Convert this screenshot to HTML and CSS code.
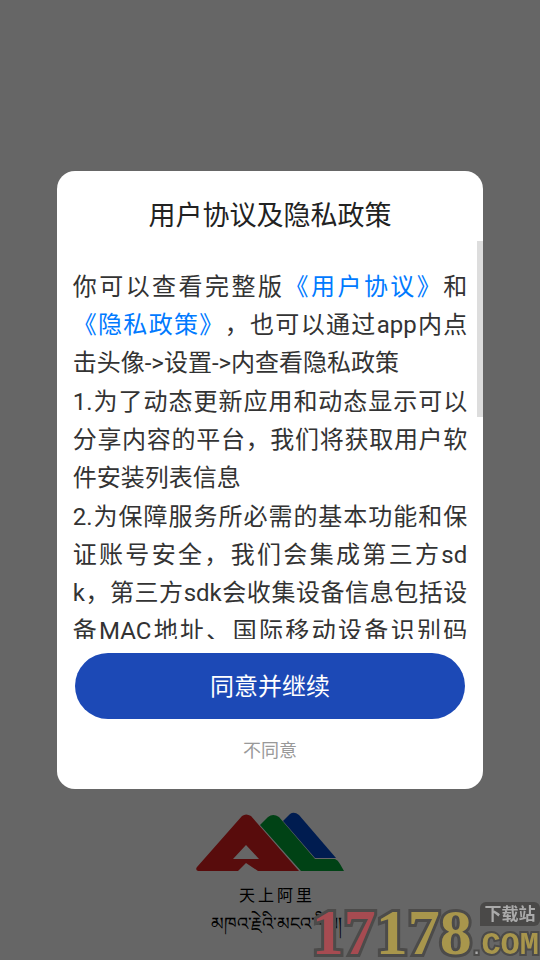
FILE: index.html
```
<!DOCTYPE html>
<html lang="zh-CN">
<head>
    <meta charset="UTF-8">
    <meta name="viewport" content="width=device-width, initial-scale=1.0">
    <title>用户协议及隐私政策</title>
    <link rel="stylesheet" href="styles.css">
</head>
<body>
    <footer class="brand">
        <svg class="brand-logo" width="148" height="60" viewBox="0 0 148 60">
            <path fill="#dc2020" fill-rule="evenodd" d="M46 4Q50 1 55 4L103 59H62L50 51L42 59H2Q-1 58 1 55ZM50 33L37 47H63Z"/>
            <path fill="#00a535" d="M64 13L72 5Q77 1 83 5L119 47H139Q142 48 144 52L148 59H105Z"/>
            <path fill="#0046c8" d="M87 9L94 2Q98 -1 103 3L140 46H119Z"/>
        </svg>
        <div class="brand-name">天上阿里</div>
        <div class="brand-tibetan" lang="bo">མཁའ་རྗེའི་མངའ་རིས།</div>
    </footer>

    <div class="mask">
        <section class="dialog" role="dialog" aria-labelledby="title">
            <h1 id="title">用户协议及隐私政策</h1>
            <div class="content">
                <p>你可以查看完整版<a href="#user">《用户协议》</a>和<a href="#privacy">《隐私政策》</a>，也可以通过app内点击头像-&gt;设置-&gt;内查看隐私政策</p>
                <p>1.为了动态更新应用和动态显示可以分享内容的平台，我们将获取用户软件安装列表信息</p>
                <p>2.为保障服务所必需的基本功能和保证账号安全，我们会集成第三方sdk，第三方sdk会收集设备信息包括设备MAC地址、国际移动设备识别码（IMEI）</p>
                <span class="thumb"></span>
            </div>
            <button class="agree">同意并继续</button>
            <button class="refuse">不同意</button>
        </section>
    </div>

    <div class="watermark">
        <div class="digits"><span>17</span>178</div>
        <div class="site">
            <div class="tag">下载站</div>
            <div class="com"><i>.</i>COM</div>
        </div>
    </div>
</body>
</html>
```
FILE: styles.css
```
* {
    box-sizing: border-box;
}

body {
    margin: 0;
    min-height: 100vh;
    display: flex;
    flex-direction: column;
    justify-content: flex-end;
    overflow: hidden;
    background: #fff;
    font-family: Roboto, "Noto Sans CJK SC", sans-serif;
    text-spacing-trim: space-all;
}

.brand {
    display: flex;
    flex-direction: column;
    align-items: center;
    padding-bottom: 20px;
    color: #000;
}

.brand-logo {
    margin-bottom: 12px;
}

.brand-name {
    padding-left: 14px;
    font-size: 16px;
    line-height: 24px;
    letter-spacing: 3px;
}

.brand-tibetan {
    padding-left: 12px;
    font-size: 18px;
    line-height: 32px;
}

.mask {
    position: fixed;
    inset: 0;
    display: flex;
    align-items: center;
    justify-content: center;
    background: rgba(0, 0, 0, 0.6);
}

.dialog {
    width: 79%;
    display: flex;
    flex-direction: column;
    background: #fff;
    border-radius: 18px;
}

h1 {
    margin: 25px 0 5px;
    font-size: 27px;
    line-height: 40px;
    font-weight: normal;
    text-align: center;
    color: #222;
}

.content {
    position: relative;
    height: 398px;
    padding: 27px 16px 0;
    overflow: hidden;
}

p {
    margin: 0 0 1px;
    font-size: 24px;
    line-height: 38px;
    text-align: justify;
    word-break: break-all;
    color: #333;
}

a {
    color: #007aff;
    text-decoration: none;
}

/* scroll position indicator */
.thumb {
    position: absolute;
    top: 0;
    right: 0;
    width: 6px;
    height: 176px;
    background: #ddd;
}

button {
    border: 0;
    padding: 0 0 3px;
    font-family: inherit;
}

.agree {
    margin: 14px 18px 0;
    height: 66px;
    border-radius: 33px;
    background: #1c49b6;
    color: #fff;
    font-size: 24px;
}

.refuse {
    margin: 13px auto 21px;
    height: 36px;
    background: none;
    color: #999;
    font-size: 18px;
}

.watermark {
    position: fixed;
    right: 0;
    bottom: 0;
    display: flex;
    align-items: flex-end;
}

.digits {
    font: bold 64px/54px "Liberation Serif", serif;
    color: #a8964c;
    -webkit-text-stroke: 6px #4c4b4a;
    paint-order: stroke fill;
}

.digits span {
    color: #a64b51;
}

.tag {
    margin-left: auto;
    width: 60px;
    border-radius: 6px 6px 6px 0;
    background: #4a4948;
    color: #aaa;
    font-size: 17px;
    font-weight: bold;
    line-height: 24px;
    text-align: center;
}

.com {
    margin-right: 1px;
    padding-top: 6px;
    font: bold 32px/28px "Liberation Mono", monospace;
    color: #a8964c;
    -webkit-text-stroke: 4px #4c4b4a;
    paint-order: stroke fill;
}

.com i {
    font-size: 16px;
    font-style: normal;
    line-height: 16px;
    color: #aaa;
}
```
